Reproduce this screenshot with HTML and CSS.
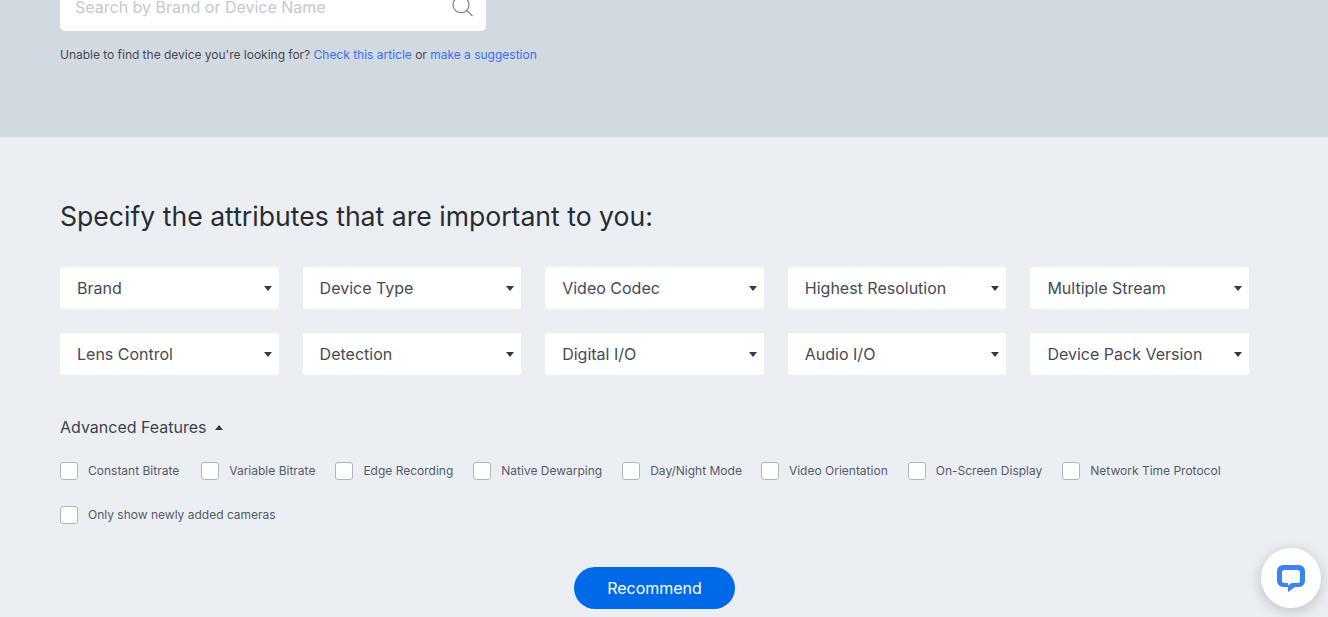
FILE: index.html
```html
<!DOCTYPE html>
<html lang="en">
<head>
    <meta charset="UTF-8">
    <meta name="viewport" content="width=device-width, initial-scale=1.0">
    <title>Camera Finder</title>
    <link rel="stylesheet" href="styles.css">
</head>
<body>

    <section class="search-band">
        <div class="search-box">
            <span class="search-placeholder">Search by Brand or Device Name</span>
            <svg class="search-icon" width="24" height="24" viewBox="0 0 24 24" fill="none" stroke="#76808b" stroke-width="1.2">
                <circle cx="12" cy="6.700" r="8"/>
                <path d="M17.700 12.500l5.800 5.500"/>
            </svg>
        </div>
        <p class="search-help">Unable to find the device you're looking for? <a href="#">Check this article</a> or <a href="#">make a suggestion</a></p>
    </section>

    <section class="filters">
        <h2>Specify the attributes that are important to you:</h2>

        <div class="select-grid">
            <div class="select-box">Brand</div>
            <div class="select-box">Device Type</div>
            <div class="select-box">Video Codec</div>
            <div class="select-box">Highest Resolution</div>
            <div class="select-box">Multiple Stream</div>
            <div class="select-box">Lens Control</div>
            <div class="select-box">Detection</div>
            <div class="select-box">Digital I/O</div>
            <div class="select-box">Audio I/O</div>
            <div class="select-box">Device Pack Version</div>
        </div>

        <div class="advanced-title">Advanced Features <span class="caret-up"></span></div>

        <div class="check-row">
            <label class="check"><input type="checkbox">Constant Bitrate</label>
            <label class="check"><input type="checkbox">Variable Bitrate</label>
            <label class="check"><input type="checkbox">Edge Recording</label>
            <label class="check"><input type="checkbox">Native Dewarping</label>
            <label class="check"><input type="checkbox">Day/Night Mode</label>
            <label class="check"><input type="checkbox">Video Orientation</label>
            <label class="check"><input type="checkbox">On-Screen Display</label>
            <label class="check"><input type="checkbox">Network Time Protocol</label>
        </div>
        <div class="check-row">
            <label class="check"><input type="checkbox">Only show newly added cameras</label>
        </div>

        <div class="actions">
            <button class="btn-recommend">Recommend</button>
        </div>
    </section>

    <button class="chat-btn" aria-label="Chat">
        <svg width="30" height="30" viewBox="0 0 30 30">
            <path fill="#3b82f6" fill-rule="evenodd" d="M7 2h16a6 6 0 0 1 6 6v10a6 6 0 0 1-6 6h-4l-7 5v-5H7a6 6 0 0 1-6-6V8a6 6 0 0 1 6-6zm1.500 5A2.500 2.500 0 0 0 6 9.500v8A2.500 2.500 0 0 0 8.500 20H12v2.500l3.500-2.500h6a2.500 2.500 0 0 0 2.500-2.500v-8A2.500 2.500 0 0 0 21.500 7z"/>
        </svg>
    </button>

</body>
</html>
```

FILE: styles.css
```css
* {
    margin: 0;
    padding: 0;
    box-sizing: border-box;
}
body {
    font-family: Inter, "Liberation Sans", sans-serif;
    background-color: #ebeff4;
    color: #343a40;
    height: 617px;
    overflow: hidden;
}
.search-band {
    height: 137px;
    padding: 0 60px;
    background-color: #d3d9e1;
}
.search-box {
    width: 426px;
    height: 31px;
    padding: 0 13px 0 15px;
    background-color: white;
    border-radius: 0 0 5px 5px;
    display: flex;
    justify-content: space-between;
    align-items: flex-end;
    overflow: hidden;
}
.search-placeholder {
    font-size: 16px;
    line-height: 20px;
    margin-bottom: 14px;
    color: #c3c8d2;
}
.search-icon {
    margin-bottom: 9px;
    flex-shrink: 0;
}
.search-help {
    margin-top: 16px;
    font-size: 12px;
    line-height: 16px;
    word-spacing: -0.1px;
    color: #444a52;
}
.search-help a {
    color: #3d6ff0;
    text-decoration: none;
    word-spacing: 0;
}
.filters {
    padding: 63px 79px 0 60px;
}
h2 {
    font-size: 26.6px;
    line-height: 32px;
    font-weight: 400;
    color: #272c33;
}
.select-grid {
    margin-top: 35px;
    display: grid;
    grid-template-columns: repeat(5, 1fr);
    gap: 24px;
}
.select-box {
    position: relative;
    height: 42px;
    padding-left: 17px;
    background-color: white;
    border-radius: 3px;
    font-size: 16px;
    line-height: 42px;
    color: #454b54;
}
.select-box::after {
    content: "";
    position: absolute;
    right: 7px;
    top: 19px;
    border-left: 4px solid transparent;
    border-right: 4px solid transparent;
    border-top: 5px solid #343a40;
}
.advanced-title {
    margin-top: 42px;
    font-size: 16px;
    line-height: 20px;
    color: #3d434b;
    display: flex;
    align-items: center;
    gap: 8px;
}
.caret-up {
    border-left: 4px solid transparent;
    border-right: 4px solid transparent;
    border-bottom: 5px solid #343a40;
}
.check-row {
    margin-top: 25px;
    height: 19px;
    display: flex;
    gap: 20px;
}
.advanced-title + .check-row {
    margin-top: 24px;
}
.check {
    display: flex;
    align-items: center;
    gap: 10px;
    font-size: 12px;
    line-height: 18px;
    color: #555b64;
    white-space: nowrap;
}
.check:first-child {
    margin-right: 2px;
}
.check:nth-child(5) {
    margin-right: -1px;
}
.check input {
    appearance: none;
    width: 18px;
    height: 18px;
    background-color: white;
    border: 1px solid #adb5bd;
    border-radius: 3px;
}
.actions {
    margin-top: 43px;
    display: flex;
    justify-content: center;
}
.btn-recommend {
    width: 161px;
    height: 42px;
    border: none;
    border-radius: 21px;
    background-color: #0069e8;
    color: white;
    font-family: inherit;
    font-size: 16px;
    cursor: pointer;
}
.chat-btn {
    position: fixed;
    right: 7px;
    bottom: 9px;
    width: 60px;
    height: 60px;
    border: none;
    border-radius: 50%;
    background-color: white;
    box-shadow: 0 3px 14px rgba(0, 0, 0, 0.2);
    display: flex;
    align-items: center;
    justify-content: center;
}
```
